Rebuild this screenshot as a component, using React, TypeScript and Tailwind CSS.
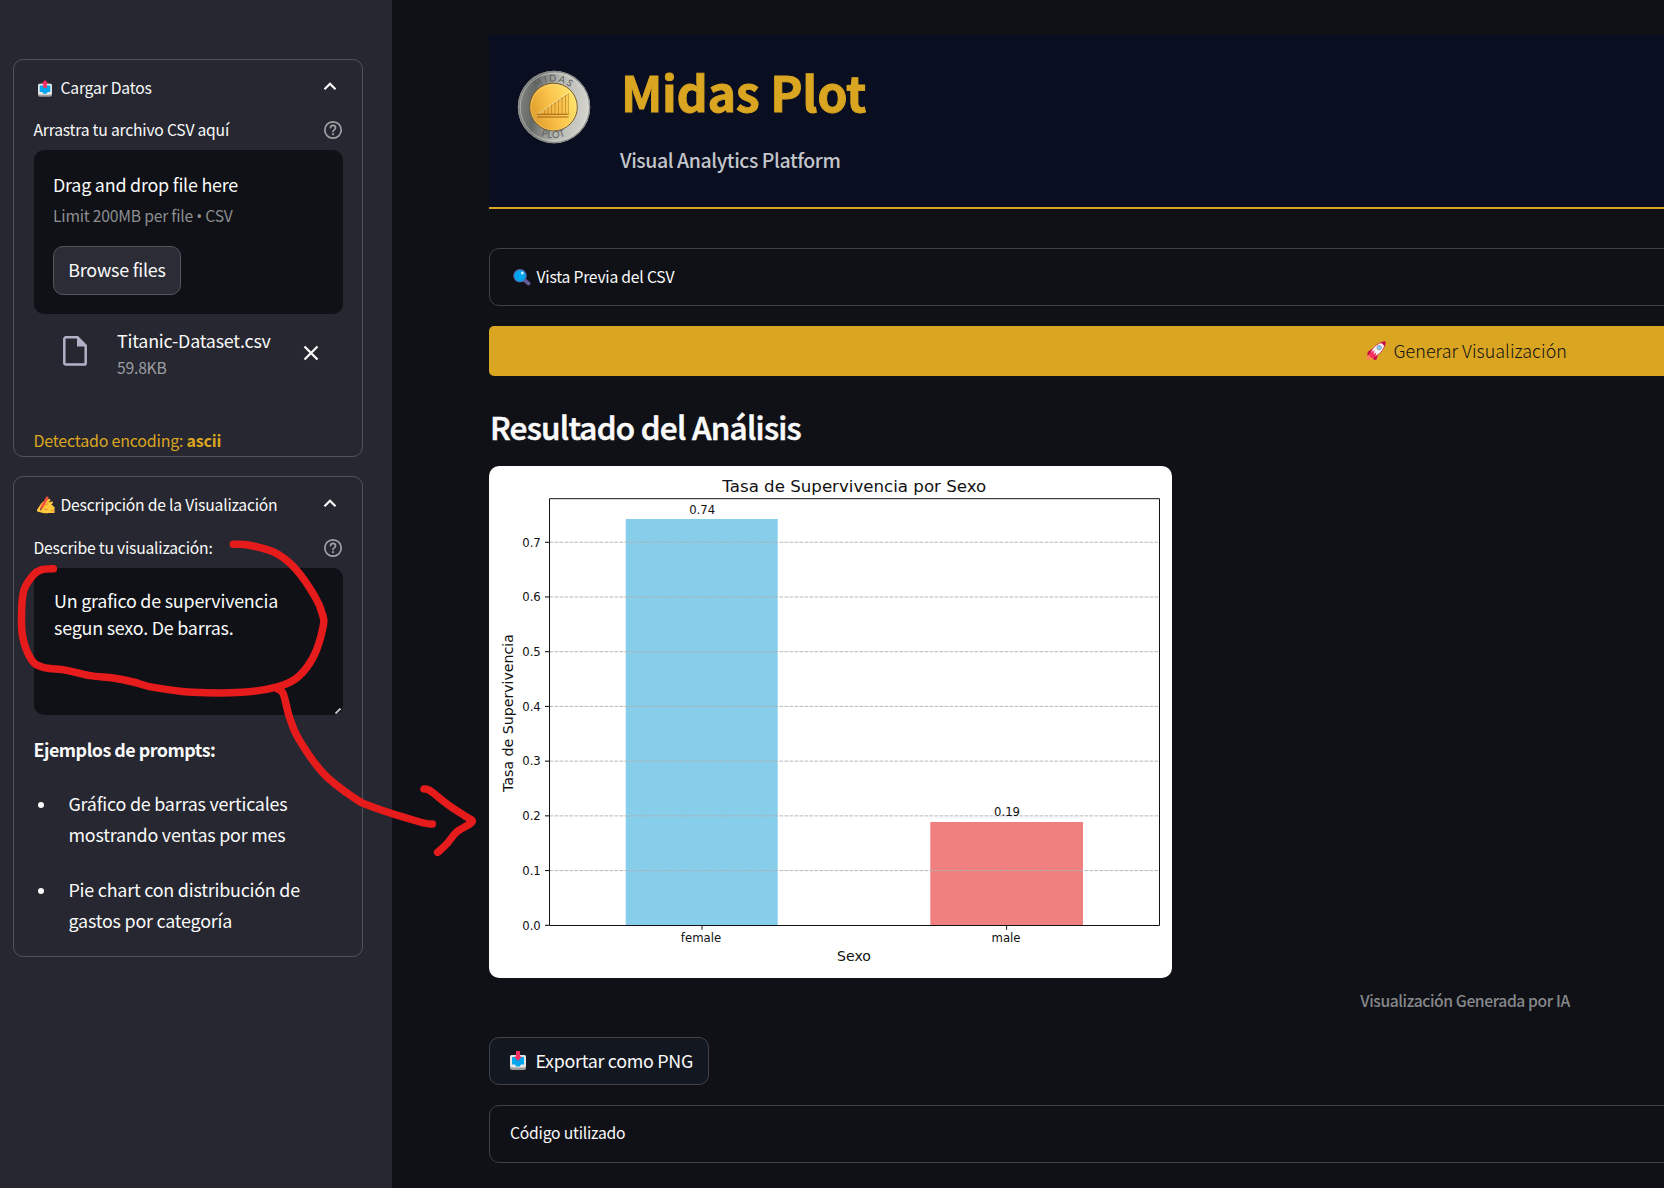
import React from "react";

type Pt = [number, number];

// Catmull-Rom spline through the given points
function smooth(p: Pt[]): string {
  let d = `M${p[0][0]} ${p[0][1]}`;
  for (let i = 0; i < p.length - 1; i++) {
    const a = p[i - 1] ?? p[i];
    const b = p[i];
    const c = p[i + 1];
    const e = p[i + 2] ?? c;
    d += `C${b[0] + (c[0] - a[0]) / 6} ${b[1] + (c[1] - a[1]) / 6} ${c[0] - (e[0] - b[0]) / 6} ${c[1] - (e[1] - b[1]) / 6} ${c[0]} ${c[1]}`;
  }
  return d;
}

const LOOP: Pt[] = [[700, 13], [745, 15], [825, 38], [885, 85], [945, 170], [968, 225], [969, 262], [943, 345], [895, 410], [835, 440], [725, 457], [580, 457], [460, 442], [400, 426], [340, 414], [270, 407], [200, 391], [130, 382], [95, 360], [68, 290], [65, 210], [72, 150], [100, 105], [125, 89], [160, 86]];
const TAIL: Pt[] = [[833, 447], [850, 462], [868, 530], [895, 595], [970, 700], [1060, 772], [1120, 802], [1260, 846], [1297, 852]];
const HEAD: Pt[] = [[1272, 747], [1290, 752], [1345, 795], [1395, 828], [1416, 846], [1370, 876], [1340, 912], [1313, 937]];

function Annotation() {
  return (
    <svg className="pointer-events-none absolute left-0 top-[540px]" width="500" height="340" viewBox="0 0 1500 1020" fill="none" stroke="#e61b1b" strokeWidth="22.5" strokeLinecap="round" strokeLinejoin="round">
      <path d={smooth(LOOP)} />
      <path d={smooth(TAIL)} />
      <path d={smooth(HEAD)} />
    </svg>
  );
}

function TrayIcon({ up, className }: { up?: boolean; className: string }) {
  return (
    <svg className={className} viewBox="0 0 16 19">
      <rect x="0" y="4" width="16" height="15" rx="2" fill="#9b9b9b" />
      <rect x="0" y="4" width="16" height="12.5" rx="2" fill="#e6e6e6" />
      <path d="M2 6h12v7.6h-3l-1.3 1.8H6.3L5 13.600H2z" fill="#00a6ed" />
      {up ? (
        <path d="M8 0l3.300 3.600H9.800V8.500H6.200V3.600H4.700z" fill="#f92f60" stroke="#f92f60" strokeWidth=".5" />
      ) : (
        <path d="M6 0h4v5.500h2L8 10 4 5.500h2z" fill="#f92f60" />
      )}
    </svg>
  );
}

function WritingHand() {
  return (
    <svg className="h-[18px] w-[18px]" viewBox="0 0 18 18">
      <path d="M.5 13L4 7.800C6 5.300 9 3.500 12 3c1.300-.1 1.800 1 1 1.800L11.500 6.500l3-.9c1.500-.3 2 1.300.8 2L14.300 8.400 17.500 11v6H12c-2.500.6-5 .3-7-.3L1 15.800c-1.100-.2-1.400-1.600-.5-2.800z" fill="#ffc83d" />
      <path d="M7.500 9.300L11 7.600M7 13l3.500.6M13.500 14l4 1.300" stroke="#e08a1e" strokeWidth=".9" fill="none" />
      <path d="M9.600 .3l2.300 1.300-6 10.500L3.400 14.300l.1-3.400z" fill="#f4513b" />
      <path d="M3.500 11.800l1.800.9L3 15z" fill="#6b4b4b" />
    </svg>
  );
}

function Magnifier() {
  return (
    <svg className="h-[17px] w-[18px]" viewBox="0 0 18 17">
      <path d="M11 10.500l4.500 4" stroke="#635994" strokeWidth="3.800" strokeLinecap="round" />
      <circle cx="7" cy="6.800" r="6.200" fill="#00a6ed" stroke="#5466a8" strokeWidth="1.100" />
      <circle cx="9.300" cy="4" r="1.500" fill="#c5ecff" />
    </svg>
  );
}

function Rocket() {
  return (
    <svg className="mt-[1px] h-[20px] w-[20px]" viewBox="0 0 20 20">
      <path d="M.5 18.500c.2-3 1-5 3.500-5.800l3 3C6.500 18 4 19 .5 18.500z" fill="#ff8257" />
      <path d="M6 8L1.800 10.800l-.6 4L6 12zM12 13.500l-1.500 5-2.800.8L7 14.500z" fill="#ca0b4a" />
      <path d="M4 14.500C5 8 10 1.800 19.300.7 19 9 12.500 15 6 16.500z" fill="#f4f4f4" stroke="#ca0b4a" strokeWidth=".7" />
      <path d="M14.500 1.700c1.500-.7 3-1 4.900-1.100 0 1.800-.3 3.200-1 4.800-1-1.800-2-2.800-3.900-3.700z" fill="#ca0b4a" />
      <path d="M8.500 9L4.500 12l-.8 3.200 1.900 1.700 3.700-1.200 1-4.200-2.600 1.800z" fill="#f92f60" />
      <circle cx="13.200" cy="6.600" r="2.300" fill="#83cbff" stroke="#9b9b9b" strokeWidth=".8" />
    </svg>
  );
}

function Coin() {
  return (
    <svg className="h-[74px] w-[74px]" viewBox="0 0 74 74">
      <defs>
        <linearGradient id="silver" x1="0" y1=".4" x2="1" y2=".5">
          <stop offset="0" stopColor="#80847f" />
          <stop offset=".22" stopColor="#646967" />
          <stop offset=".55" stopColor="#b5b7b2" />
          <stop offset="1" stopColor="#d5d5ce" />
        </linearGradient>
        <linearGradient id="gold" x1="0" y1=".7" x2="1" y2=".3">
          <stop offset="0" stopColor="#dd9b2c" />
          <stop offset=".5" stopColor="#fbc34a" />
          <stop offset="1" stopColor="#ffe870" />
        </linearGradient>
        <path id="arcTop" d="M10.500 37.500a26 26 0 0 1 52 0" />
        <path id="arcBottom" d="M4.500 36a32 32 0 0 0 64 0" />
      </defs>
      <circle cx="37" cy="37" r="36.200" fill="url(#silver)" />
      <circle cx="37" cy="37" r="35.600" fill="none" stroke="#8d8e89" strokeWidth="1.200" />
      <circle cx="37" cy="37" r="33.800" fill="none" stroke="#e3e3dd" strokeWidth=".7" opacity=".7" />
      <circle cx="36.500" cy="37" r="23.800" fill="url(#gold)" stroke="#77592c" strokeWidth="1" />
      <circle cx="36.500" cy="37.500" r="22.600" fill="none" stroke="#ffe58a" strokeWidth=".6" opacity=".7" />
      <g stroke="#b47720" fill="none">
        <path d="M21 44.500L51.500 22.500" stroke="#fff0a8" strokeWidth="1.100" />
        <path d="M21 44.500L51.500 23.500V44.500" fill="#e9a53444" strokeWidth=".5" />
        <path d="M27.500 44.500v-4.500M31 44.500v-7M34.500 44.500v-10M38 44.500V32M41.500 44.500V29.500M45 44.500V27M48.500 44.500V25" strokeWidth="1" opacity=".6" />
        <path d="M20 44.300h31.500M20 47h31.500" stroke="#a3641d" strokeWidth="1" />
      </g>
      <g fontFamily="Lato, sans-serif" fontSize="9.500" textAnchor="middle" fill="#5a5c58">
        <text letterSpacing="1.700">
          <textPath href="#arcTop" startOffset="50%">MIDAS</textPath>
        </text>
        <text letterSpacing=".6">
          <textPath href="#arcBottom" startOffset="50%">PLOT</textPath>
        </text>
      </g>
    </svg>
  );
}

function Chevron() {
  return (
    <svg className="-mt-[3px] h-[9px] w-[14px]" viewBox="0 0 14 9" fill="none" stroke="#fafafa" strokeWidth="2.200">
      <path d="M1.500 7.300L7 1.800l5.500 5.500" />
    </svg>
  );
}

function Help() {
  return (
    <svg className="h-[20px] w-[20px]" viewBox="0 0 20 20" fill="none" stroke="#a0a1a5" strokeWidth="1.700" strokeLinecap="round">
      <circle cx="10" cy="10" r="8.200" />
      <path d="M7.500 7.700A2.500 2.500 0 0 1 12.500 8c0 1.700-2.500 1.900-2.500 3.500" />
      <path d="M10 14.100v.1" strokeWidth="2" />
    </svg>
  );
}

function CardHeader({ icon, children }: { icon: React.ReactNode; children: React.ReactNode }) {
  return (
    <div className="flex h-[56px] items-center pl-[24px] pr-[25px]">
      <span className="flex w-[22.500px] items-center">{icon}</span>
      <span className="grow text-[15.700px] leading-[24px]">{children}</span>
      <Chevron />
    </div>
  );
}

function Label({ children }: { children: React.ReactNode }) {
  return (
    <div className="flex h-[24px] items-center justify-between pl-[19.500px] pr-[19.500px] text-[15.700px] leading-[24px]">
      <span>{children}</span>
      <Help />
    </div>
  );
}

function Sidebar() {
  return (
    <aside className="h-full w-[392px] shrink-0 bg-[#262730] pl-[13px] pt-[59px]">
      <section className="h-[398px] w-[350px] rounded-[10px] border border-[#51525a]">
        <CardHeader icon={<TrayIcon up className="h-[17px] w-[14px]" />}>Cargar Datos</CardHeader>
        <div className="mt-[2px]">
          <Label>Arrastra tu archivo CSV aquí</Label>
        </div>
        <div className="mx-[20px] mt-[8px] h-[164px] w-[309px] rounded-[10px] bg-[#0f1116] pl-[19px] pt-[19px]">
          <div className="text-[17.900px] leading-[30px]">Drag and drop file here</div>
          <div className="mt-[5px] text-[15.700px] leading-[24px] text-[#8d8e91]">
            Limit 200MB per file <span className="font-['Open_Sans']">•</span> CSV
          </div>
          <button className="mt-[18px] flex h-[49px] w-[128px] justify-center rounded-[10px] border border-[#55565e] bg-[#2b2c36] pt-[10px] text-[17.900px] leading-[24px]">Browse files</button>
        </div>
        <div className="mt-[12px] flex h-[60px] pl-[49px]">
          <svg className="mt-[10px] h-[30px] w-[24px]" viewBox="0 0 24 30">
            <path d="M3 1.300h11.500L22.700 9.500V27a1.600 1.600 0 0 1-1.600 1.600H3A1.600 1.600 0 0 1 1.300 27V3A1.600 1.600 0 0 1 3 1.300z" fill="none" stroke="#b0b3c7" strokeWidth="2.500" />
            <path d="M14 1v9.500h9z" fill="#b0b3c7" />
          </svg>
          <div className="ml-[30px] w-[186px]">
            <div className="text-[17.900px] leading-[28px]">Titanic-Dataset.csv</div>
            <div className="mt-[2px] text-[15.700px] leading-[24px] text-[#9c9da1]">59.8KB</div>
          </div>
          <svg className="mt-[19px] h-[16px] w-[16px]" viewBox="0 0 16 16" stroke="#fafafa" strokeWidth="2.200">
            <path d="M1.500 1.500l13 13M14.500 1.500l-13 13" />
          </svg>
        </div>
        <div className="mt-[42px] pl-[19.500px] text-[16px] leading-[24px] text-[#daa520]">
          Detectado encoding: <b>ascii</b>
        </div>
      </section>

      <section className="mt-[19px] h-[481px] w-[350px] rounded-[10px] border border-[#51525a]">
        <CardHeader icon={<span className="-ml-[1px]"><WritingHand /></span>}>Descripción de la Visualización</CardHeader>
        <div className="mt-[3px]">
          <Label>Describe tu visualización:</Label>
        </div>
        <div className="relative mx-[20px] mt-[8px] h-[147px] w-[309px] rounded-[10px] bg-[#0f1116] pl-[20px] pt-[19px] text-[17.900px] leading-[27px]">
          Un grafico de supervivencia
          <br />
          segun sexo. De barras.
          <svg className="absolute bottom-[1px] right-[2px] h-[6px] w-[6px]" viewBox="0 0 6 6" stroke="#d0d0d0" strokeWidth="1.800">
            <path d="M.5 5.500l5-5" />
          </svg>
        </div>
        <div className="mt-[19px] pl-[19.500px] text-[17.900px] font-bold leading-[30px] tracking-[-0.028em]">Ejemplos de prompts:</div>
        <ul className="mt-[24px] flex flex-col gap-[24px] text-[17.900px] leading-[31px]">
          <li className="flex">
            <span className="ml-[23.500px] mr-[25px] mt-[14px] h-[6px] w-[6px] rounded-full bg-[#fafafa]" />
            <span>Gráfico de barras verticales<br />mostrando ventas por mes</span>
          </li>
          <li className="flex">
            <span className="ml-[23.500px] mr-[25px] mt-[14px] h-[6px] w-[6px] rounded-full bg-[#fafafa]" />
            <span>Pie chart con distribución de<br />gastos por categoría</span>
          </li>
        </ul>
      </section>
    </aside>
  );
}

const TICKS = [0, 1, 2, 3, 4, 5, 6, 7];

function Chart() {
  return (
    <svg className="h-[512px] w-[683px] rounded-[10px] bg-white tracking-normal" viewBox="0 0 683 512" fontFamily="DejaVu Sans, sans-serif" fontSize="11.700" fill="#111">
      <rect x="136.700" y="53" width="152" height="406" fill="#87ceeb" />
      <rect x="441.300" y="356" width="152.700" height="103" fill="#f08080" />
      {TICKS.map((t) => {
        const y = 459.3 - t * 54.72;
        return (
          <g key={t}>
            {t > 0 && <path d={`M60.500 ${y}H670.500`} stroke="#b0b0b0" strokeWidth=".9" strokeDasharray="3.700 1.300" />}
            <path d={`M56 ${y}h4.500`} stroke="#000" strokeWidth="1" />
            <text x="51.800" y={y + 4.3} textAnchor="end">{`0.${t}`}</text>
          </g>
        );
      })}
      <path d="M213 459.500v4.300M517.600 459.500v4.300" stroke="#000" strokeWidth=".9" />
      <path d="M60.500 32.700H670.500V459.500H60.500Z" fill="none" stroke="#111" strokeWidth="1" />
      <text x="213.200" y="48" textAnchor="middle">0.74</text>
      <text x="518" y="350" textAnchor="middle">0.19</text>
      <text x="212" y="476" textAnchor="middle">female</text>
      <text x="517" y="476" textAnchor="middle">male</text>
      <text x="365" y="495" textAnchor="middle" fontSize="14.100">Sexo</text>
      <text x="365.300" y="25.500" textAnchor="middle" fontSize="16.650">Tasa de Supervivencia por Sexo</text>
      <text transform="translate(23.600 247) rotate(-90)" textAnchor="middle" fontSize="14.150">Tasa de Supervivencia</text>
    </svg>
  );
}

function Main() {
  return (
    <main className="w-[1952px] shrink-0 pt-[35px]">
      <header className="flex h-[174px] border-b-2 border-[#daa520] bg-[#090e20] pl-[28px]">
        <div className="mt-[35px]"><Coin /></div>
        <div className="ml-[29px]">
          <h1 className="ml-[1px] mt-[26px] text-[48.500px] font-bold leading-[60px] tracking-[-0.006em] text-[#daa520] [-webkit-text-stroke:0.9px_#daa520]">Midas Plot</h1>
          <p className="mt-[25px] text-[19.500px] font-medium leading-[28px] tracking-[-0.022em] text-[#c3c5ca]">Visual Analytics Platform</p>
        </div>
      </header>
      <div className="mt-[39px] flex h-[58px] items-center rounded-[10px] border border-[#3e4044] pl-[22.500px] text-[15.700px]">
        <span className="w-[24px]"><Magnifier /></span>
        Vista Previa del CSV
      </div>
      <button className="mt-[20px] flex h-[50px] w-full items-center justify-center gap-[7.500px] rounded-[5px] bg-[#daa520] pb-[2px] pl-[3px] text-[17.900px] font-light tracking-[0.003em] text-[#0f1116]">
        <Rocket />
        Generar Visualización
      </button>
      <h2 className="ml-[1px] mt-[28px] text-[31.500px] font-medium leading-[44px] tracking-[-0.024em] [-webkit-text-stroke:0.6px_#fafafa]">Resultado del Análisis</h2>
      <div className="mt-[18px]"><Chart /></div>
      <p className="mt-[11px] text-center text-[15.700px] font-medium leading-[24px] tracking-[-0.026em] text-[#87888b]">Visualización Generada por IA</p>
      <button className="mt-[24px] flex h-[48px] w-[220px] items-center rounded-[10px] border border-[#40434a] bg-[#131720] pb-[2px] pl-[20px] text-[17.900px] tracking-[-0.017em]">
        <TrayIcon className="mr-[9.500px] mt-[1px] h-[19px] w-[16px]" />
        Exportar como PNG
      </button>
      <div className="mt-[20px] flex h-[58px] items-center rounded-[10px] border border-[#3e4044] pb-[2px] pl-[20px] text-[15.700px]">Código utilizado</div>
    </main>
  );
}

export default function App() {
  return (
    <div className="relative flex h-[1188px] w-[1664px] overflow-hidden bg-[#0f1116] font-['Noto_Sans_CJK_SC','Open_Sans',sans-serif] tracking-[-0.0135em] text-[#fafafa]">
      <Sidebar />
      <div className="w-[97px] shrink-0" />
      <Main />
      <Annotation />
    </div>
  );
}
